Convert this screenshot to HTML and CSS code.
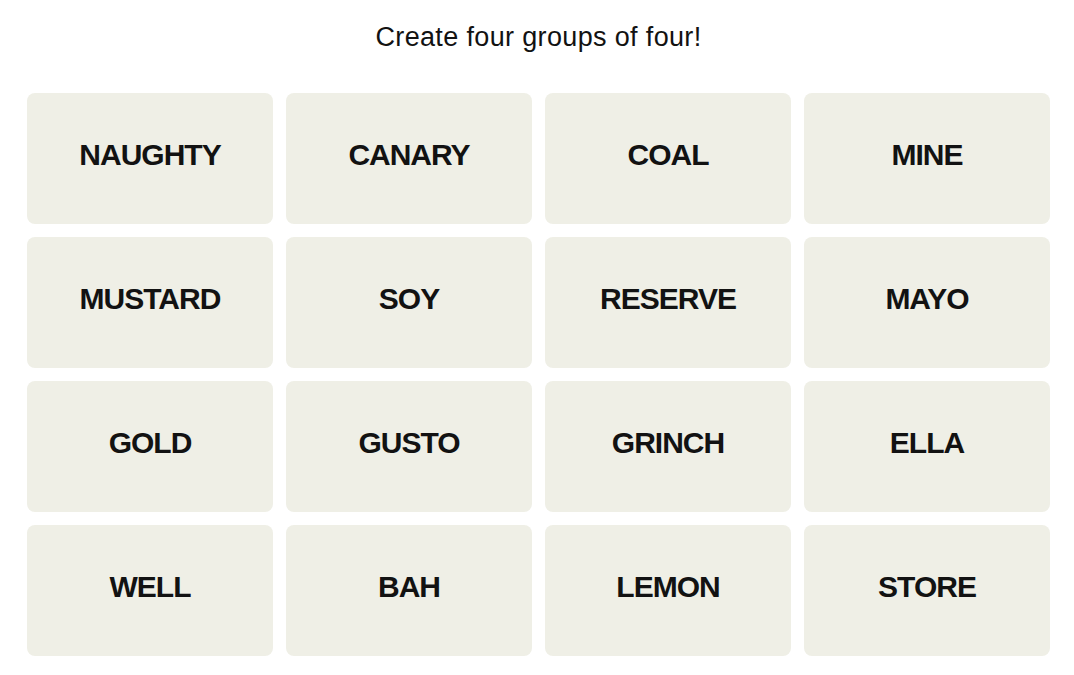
FILE: index.html
```html
<!DOCTYPE html>
<html lang="en">
<head>
<meta charset="utf-8">
<title>Connections</title>
<link rel="stylesheet" href="styles.css">
</head>
<body>
<main class="game">
  <p class="prompt">Create four groups of four!</p>
  <div class="board">
    <button class="tile">NAUGHTY</button>
    <button class="tile">CANARY</button>
    <button class="tile">COAL</button>
    <button class="tile">MINE</button>
    <button class="tile">MUSTARD</button>
    <button class="tile">SOY</button>
    <button class="tile">RESERVE</button>
    <button class="tile">MAYO</button>
    <button class="tile">GOLD</button>
    <button class="tile">GUSTO</button>
    <button class="tile">GRINCH</button>
    <button class="tile">ELLA</button>
    <button class="tile">WELL</button>
    <button class="tile">BAH</button>
    <button class="tile">LEMON</button>
    <button class="tile">STORE</button>
  </div>
</main>
</body>
</html>
```
FILE: styles.css
```css
html, body {
  margin: 0;
  padding: 0;
  background: #ffffff;
}

body {
  font-family: "Liberation Sans", Arial, sans-serif;
  color: #121212;
}

.game {
  padding: 24px 24px 0 27px;
}

.prompt {
  margin: 0;
  font-size: 27px;
  line-height: 27px;
  letter-spacing: 0.35px;
  text-align: center;
  padding-right: 0;
  color: #121212;
}

.board {
  margin-top: 42px;
  width: 1023px;
  display: grid;
  grid-template-columns: repeat(4, 1fr);
  grid-auto-rows: 131px;
  gap: 13px;
}

.tile {
  border: 0;
  margin: 0;
  background: #efefe6;
  border-radius: 8px;
  font-family: "Liberation Sans", Arial, sans-serif;
  font-weight: 700;
  font-size: 30px;
  line-height: 30px;
  letter-spacing: -1px;
  color: #121212;
  display: flex;
  align-items: center;
  justify-content: center;
  padding: 0 0 7px 0;
  cursor: pointer;
}
```
